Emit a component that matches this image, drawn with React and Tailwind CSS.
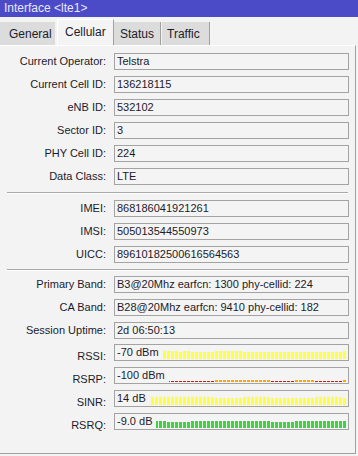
import React from 'react';

const font = { fontFamily: '"Liberation Sans", Arial, sans-serif' };

// bar heights from x ranges: [[fromX, height], ...], pitch 4px, last bar ends at x=345
function bars(segments, startX = 140) {
    const out = [];
    for (let x = startX; x <= 342; x += 4) {
        let h = segments[0][1];
        for (const [sx, sh] of segments) if (x >= sx) h = sh;
        out.push(h);
    }
    return out;
}

const rssi = bars([[0, 8], [176, 7], [180, 8], [188, 7], [213, 8], [242, 7], [340, 8]], 142);
const rsrp = bars([[0, 1], [213, 2], [269, 1], [293, 2], [313, 1], [341, 2]], 142);
const sinr = bars([[0, 8], [213, 7], [242, 8], [269, 7], [313, 8], [339, 7]], 142);
const rsrq = bars([[0, 7], [163, 6], [189, 7], [269, 6], [293, 7]], 142);

function Field({ children }) {
    return (
        <div className="w-[235px] h-[17px] border border-[#a3a3a3] bg-[#f4f4f4] flex items-center pl-[2px] pr-[2px] overflow-hidden">
            {children}
        </div>
    );
}

function Row({ label, value, low }) {
    return (
        <div className={`flex h-[17px] ${low ? 'items-end' : 'items-center'}`}>
            <div className={`w-[107px] text-right pr-[1px] ${low ? 'translate-y-[3px]' : ''}`}>{label}</div>
            <div className="ml-[7px]">
                <Field>
                    <span className="whitespace-nowrap">{value}</span>
                </Field>
            </div>
        </div>
    );
}

function SignalRow({ label, value, data, kind }) {
    return (
        <div className="flex h-[17px] items-end">
            <div className="w-[107px] text-right pr-[1px] translate-y-[3px]">{label}</div>
            <div className="ml-[7px]">
                <Field>
                    <span className="whitespace-nowrap shrink-0">{value}</span>
                    <div className="flex-1 h-full flex justify-end items-end gap-px overflow-hidden ml-[4px] pb-[1px]">
                        {data.map((h, i) => {
                            let color = kind === 'green' ? 'bg-[#3fd43f]' : 'bg-[#ffff3c]';
                            if (kind === 'rsrp') color = h === 1 ? 'bg-[#e01010]' : 'bg-[#ffa500]';
                            return <div key={i} className={`w-[3px] shrink-0 ${color}`} style={{ height: h }} />;
                        })}
                    </div>
                </Field>
            </div>
        </div>
    );
}

function Separator() {
    return <div className="ml-[7px] w-[341px] h-[2px] border-t border-[#a8a8a8] border-b border-b-white" />;
}

export default function App() {
    return (
        <div className="w-[358px] h-[456px] bg-[#f3f3f3] text-[11px] text-[#1b1b2b] overflow-hidden" style={font}>
            {/* title bar */}
            <div className="h-[17px] bg-[#4b4bc8] text-[#e8e8ff] text-[12px] leading-[17px] pl-[4px]">
                {'Interface <lte1>'}
            </div>

            {/* tabs */}
            <div className="h-[28px] flex items-end">
                <div className="w-[55px] h-[23px] bg-[#dcdcdc] flex items-center pl-[9px] text-[12px]">General</div>
                <div className="w-[2px]" />
                <div className="w-[57px] h-[26px] bg-[#f4f4f4] border-l border-t border-white border-r border-r-[#a0a0a0] flex items-center pl-[7px] text-[12px] pb-[2px]">Cellular</div>
                <div className="w-[47px] h-[23px] bg-[#dcdcdc] border-r border-[#a0a0a0] flex items-center pl-[6px] text-[12px]">Status</div>
                <div className="w-[1px]" />
                <div className="w-[48px] h-[23px] bg-[#dcdcdc] border-r border-[#a0a0a0] flex items-center pl-[5px] text-[12px]">Traffic</div>
            </div>

            {/* panel */}
            <div className="w-[356px] h-[409px] border-t border-white border-r border-b border-r-[#a0a0a0] border-b-[#a0a0a0] pt-[7px]">
                <div className="flex flex-col gap-[6px]">
                    <Row label="Current Operator:" value="Telstra" />
                    <Row label="Current Cell ID:" value="136218115" />
                    <Row label="eNB ID:" value="532102" />
                    <Row label="Sector ID:" value="3" />
                    <Row label="PHY Cell ID:" value="224" />
                    <Row label="Data Class:" value="LTE" />
                </div>

                <div className="mt-[7px] mb-[6px]"><Separator /></div>

                <div className="flex flex-col gap-[6px]">
                    <Row label="IMEI:" value="868186041921261" />
                    <Row label="IMSI:" value="505013544550973" />
                    <Row label="UICC:" value="89610182500616564563" />
                </div>

                <div className="mt-[6px] mb-[5px]"><Separator /></div>

                <div className="flex flex-col gap-[6px]">
                    <Row label="Primary Band:" value="B3@20Mhz earfcn: 1300 phy-cellid: 224" />
                    <Row label="CA Band:" value="B28@20Mhz earfcn: 9410 phy-cellid: 182" />
                    <Row label="Session Uptime:" value="2d 06:50:13" />
                </div>

                <div className="flex flex-col gap-[6px] mt-[5px]">
                    <SignalRow label="RSSI:" value="-70 dBm" data={rssi} kind="yellow" />
                    <SignalRow label="RSRP:" value="-100 dBm" data={rsrp} kind="rsrp" />
                    <SignalRow label="SINR:" value="14 dB" data={sinr} kind="yellow" />
                    <SignalRow label="RSRQ:" value="-9.0 dB" data={rsrq} kind="green" />
                </div>
            </div>
        </div>
    );
}
